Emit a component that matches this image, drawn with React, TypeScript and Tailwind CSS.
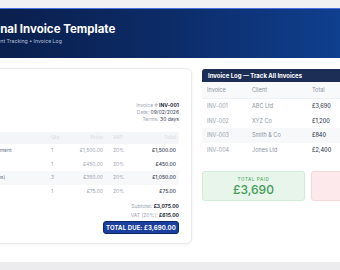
const items = [
  { desc: 'Website Development', qty: 1, price: '£1,500.00', vat: '20%', total: '£1,500.00' },
  { desc: 'Logo Design', qty: 1, price: '£450.00', vat: '20%', total: '£450.00' },
  { desc: 'Hosting (3 months)', qty: 3, price: '£350.00', vat: '20%', total: '£1,050.00' },
  { desc: 'Domain', qty: 1, price: '£75.00', vat: '20%', total: '£75.00' },
];

const log = [
  { id: 'INV-001', client: 'ABC Ltd', total: '£3,690', status: 'Paid' },
  { id: 'INV-002', client: 'XYZ Co', total: '£1,200', status: 'Due' },
  { id: 'INV-003', client: 'Smith & Co', total: '£840', status: 'Due' },
  { id: 'INV-004', client: 'Jones Ltd', total: '£2,400', status: 'Overdue' },
];

function InvoiceCard() {
  return (
    <div className="w-[249px] -ml-[57px] h-[176px] shrink-0 bg-white rounded-[6px] border border-[#e9ebef] shadow-[0_1px_3px_rgba(0,0,0,0.06)] px-[12px] pt-[33px]">
      <div className="flex justify-between items-start">
        <div className="text-[5px] leading-[7px] text-[#9aa0aa]">
          <div>Bill To</div>
        </div>
        <div className="text-right text-[5px] leading-[7px] text-[#9ca3af]">
          <div>
            Invoice # <span className="font-bold text-[#1f2937]">INV-001</span>
          </div>
          <div>
            Date: <span className="text-[#374151]">09/02/2026</span>
          </div>
          <div>
            Terms: <span className="text-[#374151]">30 days</span>
          </div>
        </div>
      </div>

      <div className="mt-[9px] text-[5px]">
        <div className="grid grid-cols-[95px_20px_34px_26px_50px] h-[12px] items-center bg-[#f3f5f9] rounded-[2px] text-[#dde1e7] font-semibold">
          <div className="pl-[4px]">Description</div>
          <div>Qty</div>
          <div className="text-right pr-[2px]">Price</div>
          <div className="pl-[8px]">VAT</div>
          <div className="text-right pr-[5px]">Total</div>
        </div>
        {items.map((it, i) => (
          <div
            key={it.desc}
            className={`grid grid-cols-[95px_20px_34px_26px_50px] h-[13.5px] items-center ${
              i === 2 ? 'bg-[#f7f8fa]' : ''
            }`}
          >
            <div className="pl-[4px] text-[#6b7280] whitespace-nowrap">{it.desc}</div>
            <div className="text-[#9ca3af]">{it.qty}</div>
            <div className="text-right pr-[2px] text-[#9ca3af]">{it.price}</div>
            <div className="pl-[8px] text-[#9ca3af]">{it.vat}</div>
            <div className="text-right pr-[5px] text-[#374151] font-medium">{it.total}</div>
          </div>
        ))}
      </div>

      <div className="mt-[4px] flex flex-col items-end text-[5px] leading-[9px] text-[#9ca3af]">
        <div>
          Subtotal: <span className="font-bold text-[#1f2937]">£3,075.00</span>
        </div>
        <div>
          VAT (20%): <span className="font-bold text-[#1f2937]">£615.00</span>
        </div>
        <div className="mt-[1px] h-[13px] w-[76px] flex items-center justify-center rounded-[3px] bg-[#1a3f9e] border border-[#0c2766] text-white font-bold text-[6px] tracking-[0.1px]">
          TOTAL DUE: £3,690.00
        </div>
      </div>
    </div>
  );
}

function InvoiceLog() {
  return (
    <div className="w-[220px] shrink-0 pt-[1px]">
      <div className="h-[13px] flex items-center bg-[#1c2e56] rounded-t-[3px] pl-[6px] text-white font-bold text-[6px]">
        Invoice Log — Track All Invoices
      </div>
      <div className="grid grid-cols-[50px_60px_50px_1fr] h-[17px] items-center bg-[#f8f9fb] border-b border-[#eef0f3] text-[5.5px] text-[#8b93a1]">
        <div className="pl-[5px]">Invoice</div>
        <div>Client</div>
        <div>Total</div>
        <div>Status</div>
      </div>
      {log.map((r, i) => (
        <div
          key={r.id}
          className={`grid grid-cols-[50px_60px_50px_1fr] h-[14.5px] items-center text-[5.5px] ${
            i === 2 ? 'bg-[#f7f8fa]' : ''
          }`}
        >
          <div className="pl-[5px] text-[#9aa1ad]">{r.id}</div>
          <div className="text-[#8d95a2]">{r.client}</div>
          <div className="text-[#374151] font-medium">{r.total}</div>
          <div className="text-[#8d95a2]">{r.status}</div>
        </div>
      ))}

      <div className="mt-[14px] flex gap-[6px]">
        <div className="w-[103px] h-[30px] rounded-[3px] bg-[#e7f5ea] border border-[#d3ecd9] flex flex-col items-center justify-center">
          <div className="text-[4.5px] tracking-[0.6px] text-[#5aab6e] font-medium leading-[6px]">TOTAL PAID</div>
          <div className="text-[12px] leading-[13px] text-[#3f9b56] font-medium">£3,690</div>
        </div>
        <div className="w-[103px] h-[30px] rounded-[3px] bg-[#fde9eb] border border-[#f8d7db] flex flex-col items-center justify-center">
          <div className="text-[4.5px] tracking-[0.6px] text-[#d9646f] font-medium leading-[6px]">OUTSTANDING</div>
          <div className="text-[12px] leading-[13px] text-[#c94452] font-medium">£4,440</div>
        </div>
      </div>
    </div>
  );
}

export default function App() {
  return (
    <div className="w-[340px] h-[270px] overflow-hidden bg-white font-['Inter','Liberation_Sans',sans-serif]">
      <div className="h-[8px] bg-[#f1f1f3]" />
      <div className="h-[50px] border-t border-[#4a6fe3] bg-linear-to-r from-[#0a1f4d] via-[#0c2c68] to-[#0f3f8f] pt-[12px]">
        <div className="-ml-[53px] whitespace-nowrap">
          <div className="text-white font-bold text-[11.5px] leading-[16px]">Professional Invoice Template</div>
          <div className="ml-[5px] text-[#b7c3dd] text-[5.2px] leading-[9px]">VAT Totals • Payment Tracking • Invoice Log</div>
        </div>
      </div>
      <div className="h-[204px] flex gap-[10px] pt-[10px]">
        <InvoiceCard />
        <InvoiceLog />
      </div>
      <div className="h-[8px] bg-[#ececee]" />
    </div>
  );
}
